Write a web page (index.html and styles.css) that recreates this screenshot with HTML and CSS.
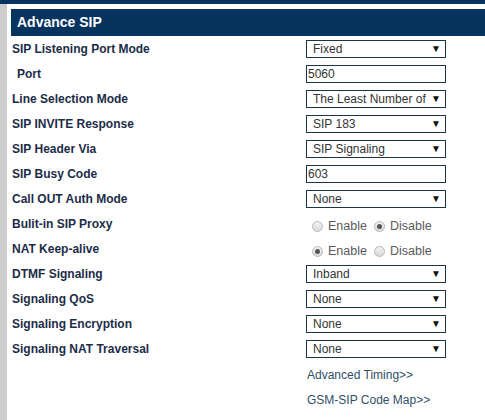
FILE: index.html
```html
<!DOCTYPE html>
<html>
<head>
<meta charset="utf-8">
<link rel="stylesheet" href="styles.css">
</head>
<body>
<div class="topbar"><span class="tb-a">Current Time:</span><span class="tb-b">Ei</span></div>
<div class="page">
  <div class="side"></div>
  <div class="main">
    <div class="header">Advance SIP</div>
    <div class="form">
      <div class="label">SIP Listening Port Mode</div>
      <div class="ctl"><div class="select"><span>Fixed</span><span class="arr">▼</span></div></div>

      <div class="label indent">Port</div>
      <div class="ctl"><div class="input">5060</div></div>

      <div class="label">Line Selection Mode</div>
      <div class="ctl"><div class="select"><span>The Least Number of</span><span class="arr">▼</span></div></div>

      <div class="label">SIP INVITE Response</div>
      <div class="ctl"><div class="select"><span>SIP 183</span><span class="arr">▼</span></div></div>

      <div class="label">SIP Header Via</div>
      <div class="ctl"><div class="select"><span>SIP Signaling</span><span class="arr">▼</span></div></div>

      <div class="label">SIP Busy Code</div>
      <div class="ctl"><div class="input">603</div></div>

      <div class="label">Call OUT Auth Mode</div>
      <div class="ctl"><div class="select"><span>None</span><span class="arr">▼</span></div></div>

      <div class="label">Bulit-in SIP Proxy</div>
      <div class="ctl radios"><span class="radio"></span><span class="rtext">Enable</span><span class="radio on"></span><span class="rtext">Disable</span></div>

      <div class="label">NAT Keep-alive</div>
      <div class="ctl radios"><span class="radio on"></span><span class="rtext">Enable</span><span class="radio"></span><span class="rtext">Disable</span></div>

      <div class="label">DTMF Signaling</div>
      <div class="ctl"><div class="select"><span>Inband</span><span class="arr">▼</span></div></div>

      <div class="label">Signaling QoS</div>
      <div class="ctl"><div class="select"><span>None</span><span class="arr">▼</span></div></div>

      <div class="label">Signaling Encryption</div>
      <div class="ctl"><div class="select"><span>None</span><span class="arr">▼</span></div></div>

      <div class="label">Signaling NAT Traversal</div>
      <div class="ctl"><div class="select"><span>None</span><span class="arr">▼</span></div></div>

      <div class="label"></div>
      <div class="ctl"><a class="link">Advanced Timing&gt;&gt;</a></div>

      <div class="label"></div>
      <div class="ctl"><a class="link">GSM-SIP Code Map&gt;&gt;</a></div>
    </div>
  </div>
</div>
</body>
</html>
```
FILE: styles.css
```css
html, body {
  margin: 0;
  padding: 0;
  background: #ffffff;
  font-family: "Liberation Sans", Arial, sans-serif;
  width: 485px;
  height: 420px;
  overflow: hidden;
}
.topbar {
  height: 4px;
  background: #07335f;
  overflow: hidden;
  display: flex;
  color: #ffffff;
  font-weight: bold;
  font-size: 13px;
}
.tb-a {
  margin-top: -11px;
  margin-left: 362px;
  line-height: 14px;
}
.tb-b {
  margin-top: -11px;
  margin-left: 30px;
  line-height: 14px;
}
.page {
  display: flex;
  height: 416px;
}
.side {
  width: 7px;
  background: #cdcdcd;
  flex: none;
}
.main {
  flex: 1;
  padding-left: 4px;
  padding-top: 5px;
}
.header {
  height: 27px;
  line-height: 27px;
  background: #07335f;
  color: #ffffff;
  font-weight: bold;
  font-size: 14px;
  padding-left: 6px;
}
.form {
  display: grid;
  grid-template-columns: 295px 160px;
  grid-auto-rows: 25px;
}
.label {
  display: flex;
  align-items: center;
  padding-left: 1px;
  font-size: 12px;
  font-weight: bold;
  color: #1c2c48;
}
.label.indent {
  padding-left: 6px;
}
.ctl {
  display: flex;
  align-items: center;
}
.select {
  box-sizing: border-box;
  width: 140px;
  height: 18px;
  border: 1px solid #1b3444;
  display: flex;
  align-items: center;
  justify-content: space-between;
  padding-left: 6px;
  padding-right: 4px;
  font-size: 12px;
  color: #333333;
  white-space: nowrap;
  overflow: hidden;
}
.arr {
  font-size: 10px;
  color: #111111;
}
.input {
  box-sizing: border-box;
  width: 140px;
  height: 18px;
  border: 1px solid #1b3444;
  display: flex;
  align-items: center;
  padding-left: 1px;
  font-size: 12px;
  color: #333333;
}
.radios {
  padding-top: 5px;
  padding-left: 6px;
}
.radio {
  box-sizing: border-box;
  width: 11px;
  height: 11px;
  border-radius: 50%;
  border: 1px solid #b8b8b8;
  background: linear-gradient(#f2f2f2, #d9d9d9);
  position: relative;
  flex: none;
}
.radio.on::after {
  content: "";
  position: absolute;
  left: 2px;
  top: 2px;
  width: 5px;
  height: 5px;
  border-radius: 50%;
  background: #555555;
}
.rtext {
  font-size: 12.5px;
  color: #5a5a5a;
  margin-left: 5px;
  margin-right: 7px;
}
.link {
  font-size: 12px;
  color: #2f4e68;
  padding-left: 1px;
  padding-top: 2px;
  text-decoration: none;
}
```
